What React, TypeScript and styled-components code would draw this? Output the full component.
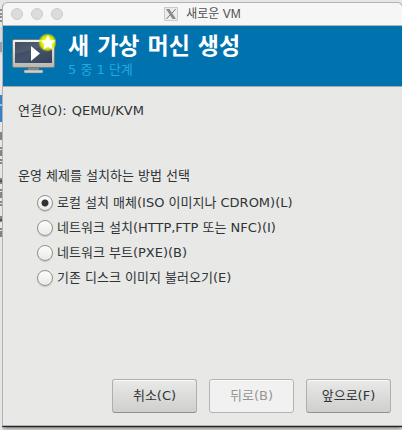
import React, { useState } from 'react';
import styled, { createGlobalStyle } from 'styled-components';

const GlobalStyle = createGlobalStyle`
  *, *::before, *::after { box-sizing: border-box; }
  body {
    margin: 0;
    background: #e9e9e9;
    color: #2e3436;
    font: 13px/20px "DejaVu Sans", "Noto Sans CJK KR", sans-serif;
  }
`;

const Desktop = styled.div`
  display: grid;
  grid-template-columns: 3px 1fr;
  min-height: 100vh;
  padding: 3px 0 5px;
  overflow: hidden;
  background: #e6e6e6;
`;

const BehindWindow = styled.svg`
  display: block;
  width: 3px;
  height: 420px;
`;

const Window = styled.section`
  display: flex;
  flex-direction: column;
  border-radius: 5px 5px 0 0;
  background: #e8e8e6;
  box-shadow: 0 0 0 1px #b2b2b2, 0 1px 1px 1px #1c1c1c, 0 3px 4px #00000099;
  clip-path: inset(-1px -1px -5px -1px);
`;

const TitleBar = styled.div`
  display: flex;
  align-items: center;
  height: 23px;
  padding: 0 8px;
  border-radius: 5px 5px 0 0;
  border-bottom: 1px solid #b4b4b4;
  background: #f6f6f6;
`;

const WindowControls = styled.div`
  display: flex;
  flex: 1;
  gap: 8px;
`;

const WindowControl = styled.button`
  width: 12px;
  height: 12px;
  padding: 0;
  border: 1px solid #cdcdcd;
  border-radius: 50%;
  background: #dcdcdc;
`;

const WindowTitle = styled.div`
  display: flex;
  align-items: center;
  gap: 8px;
  color: #505050;
  font: 12px/20px "Liberation Sans", "Noto Sans CJK KR", sans-serif;
`;

const TitleBalance = styled.div`
  flex: 1;
`;

const Banner = styled.header`
  display: flex;
  gap: 12px;
  height: 61px;
  padding: 5px 8px 0;
  border-bottom: 1px solid #a9aaa8;
  background: #0073af;
`;

const BannerIcon = styled.svg`
  flex: none;
  width: 45px;
  height: 45px;
`;

const Heading = styled.h1`
  margin: 0;
  color: #fff;
  font-size: 23px;
  line-height: 30px;
  font-weight: 700;
`;

const Step = styled.p`
  margin: 0;
  color: #20a9e0;
  line-height: 18px;
`;

const Content = styled.main`
  display: flex;
  flex: 1;
  flex-direction: column;
  padding: 14px 11px 12px 15px;
`;

const Connection = styled.div`
  display: flex;
  gap: 5px;
`;

const Methods = styled.fieldset`
  min-width: 0;
  margin: 45px 0 0;
  padding: 0;
  border: 0;
`;

const Legend = styled.legend`
  padding: 0;
  margin-bottom: 4px;
`;

const Method = styled.label`
  display: flex;
  align-items: center;
  gap: 4px;
  height: 25px;
  padding-left: 19px;
  white-space: nowrap;
`;

const Radio = styled.input`
  appearance: none;
  flex: none;
  width: 16px;
  height: 16px;
  margin: 0;
  border: 1px solid #90918b;
  border-radius: 50%;
  background: linear-gradient(#fdfdfd, #e9e9e7);
  box-shadow: 0 1px 1px #00000022;

  &:checked {
    background:
      radial-gradient(circle, #2e3436 0 3px, #2e343600 4px),
      linear-gradient(#fdfdfd, #e9e9e7);
  }
`;

const Actions = styled.footer`
  display: flex;
  justify-content: flex-end;
  gap: 12px;
  margin-top: auto;
`;

const Action = styled.button`
  width: 85px;
  height: 34px;
  padding: 0;
  border: 1px solid #afb0ae;
  border-bottom-color: #91928d;
  border-radius: 3px;
  background: linear-gradient(#e9e9e7, #cfcfcd);
  box-shadow: inset 0 1px #fafafa;
  color: #2e3436;
  font: inherit;

  &:disabled {
    border-color: #b4b5b3;
    background: #f1f1f1;
    color: #949696;
  }
`;

const methods = [
  { id: 'local', label: '로컬 설치 매체(ISO 이미지나 CDROM)(L)' },
  { id: 'network', label: '네트워크 설치(HTTP,FTP 또는 NFC)(I)' },
  { id: 'pxe', label: '네트워크 부트(PXE)(B)' },
  { id: 'import', label: '기존 디스크 이미지 불러오기(E)' },
];

function DesktopEdge() {
  return (
    <BehindWindow viewBox="0 0 3 420" aria-hidden="true">
      <path d="M0 7h2M0 11h3M0 14h3M0 18h3" stroke="#333" />
      <path d="M0 24h3v28H0z" fill="#d8d8d8" />
      <path d="M0 39h2v10H0z" fill="#9a9fa3" />
      <path d="M0 92h3v27H0z" fill="#3b7fc8" />
      <path d="M0 102h2" stroke="#fff" />
      <path
        d="M1 129v6M0 136h3M0 145h2M1 147v4M0 152h3M0 157h2M0 160h3M1 175v6M0 178h3M0 187h2M1 189v4M0 194h3M0 199h2M0 202h3M1 213v6M0 217h3M0 226h2M1 228v4M0 233h3"
        stroke="#222"
      />
    </BehindWindow>
  );
}

function XLogo() {
  return (
    <svg width="14" height="14" viewBox="0 0 14 14" aria-hidden="true">
      <path d="M.5.5h13v13H.5z" fill="#ececec" stroke="#cacaca" />
      <path d="M2 2h3.4L12 12H8.6z" fill="#8a8a8a" />
      <path d="M11.6 2 8 6.2M6 8 2.4 12" stroke="#777" strokeWidth="1" />
    </svg>
  );
}

function NewMachineIcon() {
  return (
    <BannerIcon viewBox="0 0 45 45" aria-hidden="true">
      <defs>
        <linearGradient id="bezel" x2="0" y2="1">
          <stop stopColor="#f4f4f2" />
          <stop offset="1" stopColor="#b5b7b4" />
        </linearGradient>
        <linearGradient id="screen" x2="1" y2="1">
          <stop stopColor="#333f54" />
          <stop offset=".5" stopColor="#46546b" />
          <stop offset="1" stopColor="#344158" />
        </linearGradient>
        <radialGradient id="glow">
          <stop offset=".5" stopColor="#fff500" />
          <stop offset=".75" stopColor="#dfea00" stopOpacity=".85" />
          <stop offset="1" stopColor="#c9e000" stopOpacity="0" />
        </radialGradient>
      </defs>
      <path d="M17 36h11v4H17z" fill="#888b88" />
      <rect x="13" y="39" width="19" height="3" rx="1" fill="#d0d1cf" stroke="#6d706d" strokeWidth=".5" />
      <rect x="1.5" y="8.5" width="42" height="28" rx="1.5" fill="url(#bezel)" stroke="#777b78" />
      <path d="M4 11h37v21H4z" fill="url(#screen)" />
      <path d="M4 11h37v4C25 16 17 20 4 23z" fill="#fff" opacity=".08" />
      <path d="M20 15v15l9-7.5z" fill="#fff" />
      <circle cx="36.500" cy="11.5" r="9.5" fill="url(#glow)" />
      <path d="m37 4 2.2 4.900 5.300.6-4 3.600 1.100 5.300-4.600-2.700-4.600 2.700 1.100-5.300-4-3.600 5.300-.6z" fill="#fff" />
    </BannerIcon>
  );
}

export default function App() {
  const [method, setMethod] = useState('local');

  return (
    <>
      <GlobalStyle />
      <Desktop>
        <DesktopEdge />
        <Window aria-label="새로운 VM">
          <TitleBar>
            <WindowControls>
              <WindowControl aria-label="닫기" />
              <WindowControl aria-label="최소화" />
              <WindowControl aria-label="확대" />
            </WindowControls>
            <WindowTitle>
              <XLogo />
              <span>새로운 VM</span>
            </WindowTitle>
            <TitleBalance />
          </TitleBar>
          <Banner>
            <NewMachineIcon />
            <div>
              <Heading>새 가상 머신 생성</Heading>
              <Step>5 중 1 단계</Step>
            </div>
          </Banner>
          <Content>
            <Connection>
              <span>연결(O):</span>
              <span>QEMU/KVM</span>
            </Connection>
            <Methods>
              <Legend>운영 체제를 설치하는 방법 선택</Legend>
              {methods.map(({ id, label }) => (
                <Method key={id}>
                  <Radio
                    type="radio"
                    name="method"
                    value={id}
                    checked={method === id}
                    onChange={() => setMethod(id)}
                  />
                  {label}
                </Method>
              ))}
            </Methods>
            <Actions>
              <Action type="button">취소(C)</Action>
              <Action type="button" disabled>뒤로(B)</Action>
              <Action type="button">앞으로(F)</Action>
            </Actions>
          </Content>
        </Window>
      </Desktop>
    </>
  );
}
